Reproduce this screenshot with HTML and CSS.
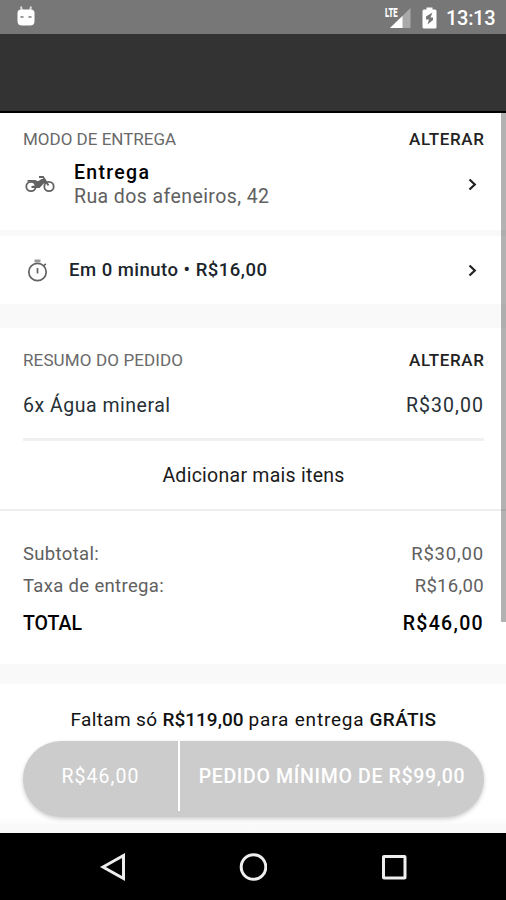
FILE: index.html
```
<!DOCTYPE html>
<html lang="pt-BR">
<head>
<meta charset="utf-8">
<title>Pedido</title>
<link rel="stylesheet" href="styles.css">
</head>
<body>
<div class="screen">
  <div class="status">
    <svg class="droid" width="20" height="22" viewBox="0 0 20 22"><path d="M5 1.500 6 6M15 1.500 14 6" stroke="#d8d8d8" stroke-width="2"/><path d="M1.500 8Q1.500 4.500 5 4.500H15Q18.500 4.500 18.500 8V16Q18.500 20.500 14 20.500H6Q1.500 20.500 1.500 16Z" fill="#fff"/><path d="M4.500 12H7.500M12.500 12H15.500" stroke="#777" stroke-width="1.600"/></svg>
    <div class="status-right">
      <div class="signal">
        <span class="lte">LTE</span>
        <svg width="21" height="20" viewBox="0 0 21 20"><path d="M20.500 0V20H0Z" fill="#a9a9a9"/><path d="M12.500 8V20H0Z" fill="#fff"/></svg>
      </div>
      <svg class="battery" width="15" height="22" viewBox="0 0 15 22"><path d="M4.500 0.500H10.500V2.500H13Q14.500 2.500 14.500 4V20Q14.500 21.500 13 21.500H2Q0.500 21.500 0.500 20V4Q0.500 2.500 2 2.500H4.500Z" fill="#fff"/><path d="M10.500 5.500 4 9.500V12.500H7L5.500 17.500 11 13V10.500H8.500Z" fill="#777"/></svg>
      <span class="clock">13:13</span>
    </div>
  </div>
  <div class="appbar"></div>

  <main class="content">
    <section class="card mode">
      <div class="row head"><span class="label">MODO DE ENTREGA</span><span class="change">ALTERAR</span></div>
      <div class="row address">
        <svg class="moto" width="30" height="20" viewBox="0 0 30 20" fill="none" stroke="#626262" stroke-width="1.800"><circle cx="6" cy="12.500" r="4.700"/><circle cx="24" cy="12.500" r="4.700"/><path d="M14 3H18L23.500 11.500"/><path d="M2.500 6H10L13 7.200 16.500 5H19.500L22.500 8 18.500 9.800 14.500 14H6.500V12L10 11.500 10.500 9.500 8 7.800H2.500Z" fill="#626262" stroke="none"/></svg>
        <div class="where"><span class="place">Entrega</span><span class="street">Rua dos afeneiros, 42</span></div>
        <svg class="chev" width="9" height="13" viewBox="0 0 9 13"><path d="M1.500 1.500 6.800 6.500 1.500 11.500"/></svg>
      </div>
    </section>
    <section class="card time">
      <svg class="watch" width="22" height="24" viewBox="0 0 22 24" fill="none" stroke="#626262" stroke-width="1.700"><circle cx="10.500" cy="14" r="8.700"/><path d="M10.500 10V15.500"/><path d="M16.500 8 18.800 5.800"/><path d="M7.500 3H13.500" stroke="#999" stroke-width="3"/></svg>
      <span class="when">Em 0 minuto • R$16,00</span>
      <svg class="chev" width="9" height="13" viewBox="0 0 9 13"><path d="M1.500 1.500 6.800 6.500 1.500 11.500"/></svg>
    </section>
    <section class="card summary">
      <div class="row head"><span class="label resume">RESUMO DO PEDIDO</span><span class="change">ALTERAR</span></div>
      <div class="row item"><span>6x Água mineral</span><span class="price">R$30,00</span></div>
      <div class="more">Adicionar mais itens</div>
    </section>
    <section class="card totals">
      <div class="row line"><span>Subtotal:</span><span class="amount">R$30,00</span></div>
      <div class="row line"><span>Taxa de entrega:</span><span>R$16,00</span></div>
      <div class="row total"><span>TOTAL</span><span class="sum">R$46,00</span></div>
    </section>
    <section class="card checkout">
      <p class="promo">Faltam só <b class="missing">R$119,00</b> <span class="for">para entrega</span> <b>GRÁTIS</b></p>
      <div class="button"><span class="value">R$46,00</span><span class="minimum">PEDIDO MÍNIMO DE R$99,00</span></div>
    </section>
    <div class="scrollbar"></div>
  </main>

  <nav class="nav">
    <svg width="28" height="30" viewBox="0 0 28 30"><path d="M4 15 24.500 3.500V26.500Z"/></svg>
    <svg width="28" height="30" viewBox="0 0 28 30"><circle cx="14.500" cy="15" r="12.300"/></svg>
    <svg width="28" height="30" viewBox="0 0 28 30"><rect x="3.500" y="4.500" width="21.500" height="21.500" rx="0.500"/></svg>
  </nav>
</div>
</body>
</html>
```
FILE: styles.css
```
* { box-sizing: border-box; }
body { margin: 0; font-family: Roboto, sans-serif; color: #111; }
svg { display: block; flex: none; }
b { font-weight: 500; }
.screen { width: 506px; height: 900px; display: flex; flex-direction: column; overflow: hidden; background: #fff; }

.status { height: 34px; flex: none; background: #777; display: flex; justify-content: space-between; padding: 0 10px 0 16px; }
.droid { margin-top: 5px; }
.status-right { display: flex; }
.signal { position: relative; width: 26px; padding: 8px 0 0 5px; }
.lte { position: absolute; left: 0; top: 5px; font-size: 13px; line-height: 15px; font-weight: 900; color: #fff; transform: scaleX(.6); transform-origin: 0 0; }
.battery { margin: 7px 0 0 11px; }
.clock { margin: 6px 0 0 9px; font-size: 20px; line-height: 24px; font-weight: 500; letter-spacing: -.3px; color: #fff; width: 50px; }
.appbar { height: 79px; flex: none; background: #333; border-bottom: 2px solid #000; }

.content { position: relative; height: 720px; flex: none; background: #f9f9f9; display: flex; flex-direction: column; }
.card { background: #fff; flex: none; padding: 0 22px 0 23px; }
.row { display: flex; justify-content: space-between; align-items: center; }
.head { height: 20px; font-size: 17px; line-height: 20px; }
.label { color: #696969; }
.resume { letter-spacing: .13px; }
.change { font-weight: 500; letter-spacing: .66px; margin-right: -.6px; color: #222; }
.chev { fill: none; stroke: #222; stroke-width: 2.2; margin-right: 7px; }

.mode { height: 117px; padding-top: 16px; margin-bottom: 6px; }
.address { height: 48px; margin-top: 11px; }
.moto { margin-left: 2px; }
.where { flex: 1; margin-left: 19px; padding-top: 2px; display: flex; flex-direction: column; line-height: 24px; font-size: 19.5px; }
.place { font-weight: 500; letter-spacing: 1.3px; color: #000; }
.street { letter-spacing: .41px; color: #606060; }

.time { height: 68px; margin-bottom: 24px; display: flex; align-items: center; }
.watch { margin-left: 4px; }
.when { flex: 1; margin-left: 20px; font-size: 18.5px; font-weight: 500; letter-spacing: .49px; color: #1b252b; }

.summary { height: 183px; padding-top: 22px; border-bottom: 2px solid #eee; }
.item { height: 47px; margin-top: 24px; padding: 2px 0 22px; border-bottom: 3px solid #f0f0f0; font-size: 19.5px; line-height: 22px; letter-spacing: .51px; color: #263036; }
.price { letter-spacing: 1.06px; }
.more { height: 68px; line-height: 70px; font-size: 19.5px; letter-spacing: .26px; text-align: center; color: #1b1b1b; }

.totals { height: 153px; padding-top: 32px; margin-bottom: 20px; }
.line { height: 22px; margin-bottom: 10px; font-size: 18.5px; line-height: 22px; letter-spacing: .33px; color: #606060; }
.amount { letter-spacing: .83px; }
.total { margin-top: 16px; height: 22px; font-size: 19.5px; line-height: 22px; font-weight: 500; color: #000; }
.sum { letter-spacing: 1.33px; }

.checkout { height: 149px; padding-top: 25px; background: linear-gradient(#fff 0, #fff 134px, #f9f9f9 142px); }
.promo { margin: 0; height: 32px; line-height: 22px; font-size: 19px; letter-spacing: .35px; text-align: center; white-space: nowrap; }
.missing { letter-spacing: 0; }
.for { letter-spacing: .8px; }
.button { height: 76px; border-radius: 38px; background: #ccc; display: flex; color: #fff; font-size: 19.5px; box-shadow: 0 2px 4px rgba(0,0,0,.2); }
.value { width: 157px; height: 70px; border-right: 2px solid #fff; line-height: 72px; text-align: center; letter-spacing: 1.06px; }
.minimum { flex: 1; line-height: 72px; text-align: center; font-weight: 500; letter-spacing: .67px; }
.scrollbar { position: absolute; top: 0; right: 0; width: 5px; height: 509px; background: rgba(0,0,0,.3); }

.nav { height: 67px; flex: none; background: #000; display: flex; justify-content: center; align-items: center; gap: 112.500px; }
.nav svg { fill: none; stroke: #eee; stroke-width: 3; }
```
